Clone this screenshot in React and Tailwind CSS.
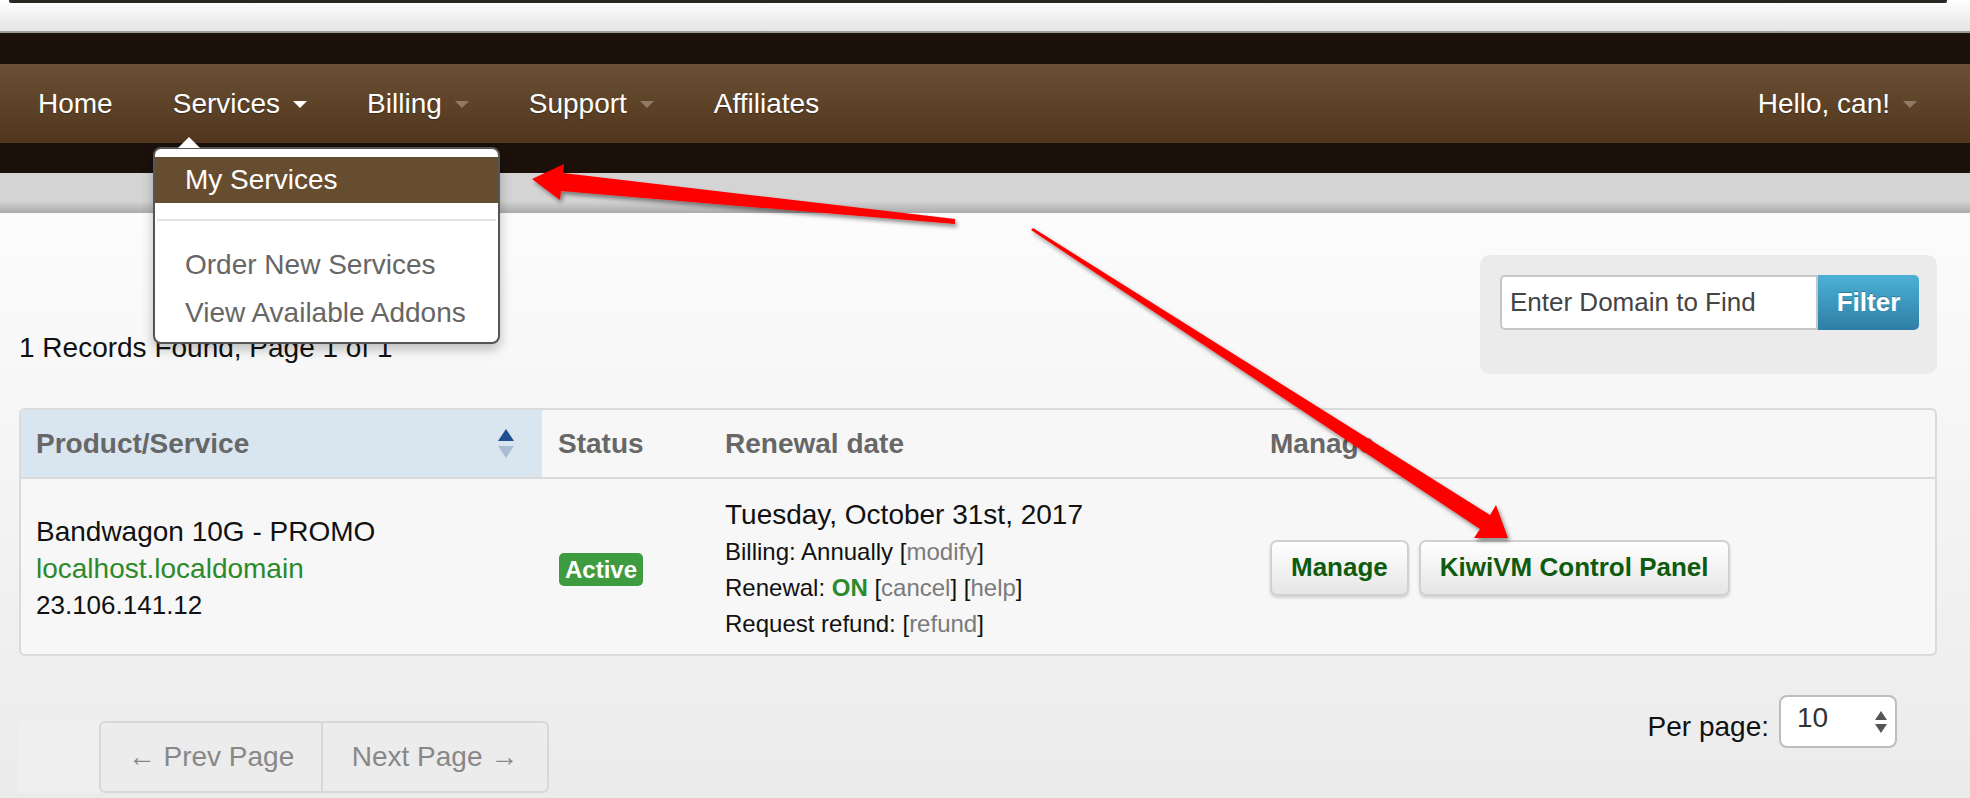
import React from 'react';

const Caret = ({ tone }) => (
  <span className={`ml-[13px] mt-[2px] inline-block h-0 w-0 border-x-[7px] border-t-[7px] border-x-transparent ${tone}`} />
);

function SortIcon() {
  return (
    <svg width="18" height="32" viewBox="0 0 18 32">
      <polygon points="1,13 9,1 17,13" fill="#1f4f8f" />
      <polygon points="1,18 17,18 9,30" fill="#a9bdd2" />
    </svg>
  );
}

function Arrows() {
  return (
    <svg className="pointer-events-none absolute left-0 top-0" width="1970" height="798">
      <defs>
        <filter id="sh" x="-10%" y="-10%" width="120%" height="130%">
          <feDropShadow dx="2" dy="3" stdDeviation="2" floodColor="#000" floodOpacity="0.45" />
        </filter>
      </defs>
      <polygon
        filter="url(#sh)"
        fill="#ff0000"
        points="955,219 563,173 564,164 532,179 560,200 561,191 955,224"
      />
      <polygon
        filter="url(#sh)"
        fill="#ff0000"
        points="1033,228 1490,515 1496,505 1508,538 1474,538 1480,529 1031,230"
      />
    </svg>
  );
}

export default function App() {
  return (
    <div className="relative flex h-[798px] w-[1970px] flex-col overflow-hidden font-['Liberation_Sans',Arial,sans-serif]">
      {/* window strip */}
      <div className="h-[33px] border-b-2 border-[#9c9c9c] bg-linear-to-b from-white to-[#e4e4e4]">
        <div className="ml-[9px] h-[3px] w-[1938px] rounded-b-[2px] bg-[#2a2622]" />
      </div>
      <div className="h-[31px] bg-[#1b100a]" />

      <nav className="flex h-[79px] items-center bg-linear-to-b from-[#6a5034] to-[#51361d] pl-[8px] pr-[23px] text-[28px] text-white [text-shadow:0_1px_1px_rgba(0,0,0,0.35)]">
        <a className="px-[30px]">Home</a>
        <a className="flex items-center px-[30px]">Services<Caret tone="border-t-white" /></a>
        <a className="flex items-center px-[30px]">Billing<Caret tone="border-t-[#8f7b65]" /></a>
        <a className="flex items-center px-[30px]">Support<Caret tone="border-t-[#8f7b65]" /></a>
        <a className="px-[30px]">Affiliates</a>
        <a className="ml-auto flex items-center px-[30px]">Hello, can!<Caret tone="border-t-[#8f7b65]" /></a>
      </nav>

      <div className="h-[30px] bg-[#1b100a]" />
      <div className="h-[40px] bg-linear-to-b from-[#d4d4d4] from-70% to-[#ababab]" />

      <main className="flex-1 bg-linear-to-b from-[#fcfcfc] to-[#ebebeb] pl-[19px] pr-[33px] pt-[42px]">
        <div className="flex items-end justify-between">
          <div className="mb-[10px] text-[28px] leading-[32px] text-[#111]">1 Records Found, Page 1 of 1</div>
          <div className="flex h-[119px] w-[457px] items-start rounded-[10px] bg-[#ebebeb] pl-[20px] pt-[20px]">
            <input
              placeholder="Enter Domain to Find"
              className="h-[55px] w-[318px] rounded-l-[5px] border-2 border-[#c6c6c6] bg-white pl-[8px] text-[26px] text-[#444] placeholder:text-[#444] outline-none"
            />
            <button className="h-[55px] w-[101px] rounded-r-[5px] bg-linear-to-b from-[#4cb1d6] to-[#2e7ea6] text-[26px] font-bold text-white [text-shadow:0_-1px_0_rgba(0,0,0,0.25)]">
              Filter
            </button>
          </div>
        </div>

        <div className="mt-[34px] overflow-hidden rounded-[6px] border-2 border-[#dadada] bg-[#f7f7f7]">
          <div className="grid h-[69px] grid-cols-[521px_166px_545px_1fr] border-b-2 border-[#dadada] text-[28px] font-bold text-[#676767]">
            <div className="flex items-center justify-between bg-[#d9e6f0] pl-[15px] pr-[27px]">
              Product/Service
              <SortIcon />
            </div>
            <div className="flex items-center pl-[16px]">Status</div>
            <div className="flex items-center pl-[17px]">Renewal date</div>
            <div className="flex items-center pl-[17px]">Manage</div>
          </div>

          <div className="grid h-[175px] grid-cols-[521px_166px_545px_1fr] items-center text-[#111]">
            <div className="pl-[15px] pt-[3px]">
              <div className="text-[28px] leading-[37px]">Bandwagon 10G - PROMO</div>
              <div className="text-[28px] leading-[37px] text-[#2b8a2b]">localhost.localdomain</div>
              <div className="text-[26px] leading-[36px]">23.106.141.12</div>
            </div>
            <div className="pl-[17px] pt-[6px]">
              <span className="inline-flex h-[33px] items-center rounded-[5px] bg-[#3f9b3f] px-[6px] text-[24px] font-bold text-white">
                Active
              </span>
            </div>
            <div className="pl-[17px] pt-[5px]">
              <div className="text-[28px] leading-[38px]">Tuesday, October 31st, 2017</div>
              <div className="text-[24px] leading-[36px]">
                Billing: Annually [<span className="text-[#7a7a7a]">modify</span>]
              </div>
              <div className="text-[24px] leading-[36px]">
                Renewal: <span className="font-bold text-[#2b8a2b]">ON</span> [<span className="text-[#7a7a7a]">cancel</span>] [<span className="text-[#7a7a7a]">help</span>]
              </div>
              <div className="text-[24px] leading-[36px]">
                Request refund: [<span className="text-[#7a7a7a]">refund</span>]
              </div>
            </div>
            <div className="flex gap-[10px] pl-[17px] pt-[2px]">
              <button className="h-[56px] rounded-[7px] border-2 border-[#d0d0d0] bg-linear-to-b from-white to-[#e6e6e6] px-[19px] text-[26px] font-bold text-[#0e5a0e] shadow-[0_2px_3px_rgba(0,0,0,0.15)]">
                Manage
              </button>
              <button className="h-[56px] rounded-[7px] border-2 border-[#d0d0d0] bg-linear-to-b from-white to-[#e6e6e6] px-[19px] text-[26px] font-bold text-[#0e5a0e] shadow-[0_2px_3px_rgba(0,0,0,0.15)]">
                KiwiVM Control Panel
              </button>
            </div>
          </div>
        </div>

        <div className="mt-[39px] flex items-start justify-between">
          <div className="ml-[-1px] mt-[26px] rounded-[6px] bg-[#efefef] pl-[81px]">
            <div className="flex h-[72px] rounded-[6px] border-2 border-[#d8d8d8] bg-[#ececec] text-[28px] text-[#888]">
              <div className="flex w-[222px] items-center justify-center border-r-2 border-[#d8d8d8]">← Prev Page</div>
              <div className="flex w-[224px] items-center justify-center">Next Page →</div>
            </div>
          </div>
          <div className="mr-[40px] flex items-center">
            <span className="mt-[10px] text-[28px] text-[#111]">Per page:</span>
            <div className="ml-[10px] flex h-[53px] w-[118px] items-start justify-between rounded-[8px] border-2 border-[#bdbdbd] bg-white pl-[16px] pr-[8px] pt-[6px]">
              <span className="text-[28px] leading-[30px] text-[#333]">10</span>
              <svg width="12" height="26" viewBox="0 0 12 26" className="mt-[7px]">
                <polygon points="0,10 6,1 12,10" fill="#555" />
                <polygon points="0,14 12,14 6,23" fill="#555" />
              </svg>
            </div>
          </div>
        </div>
      </main>

      {/* dropdown menu */}
      <div className="absolute left-[153px] top-[147px] h-[197px] w-[347px] rounded-[8px] border-2 border-[#555] bg-white shadow-[0_5px_12px_rgba(0,0,0,0.25)]">
        <span className="absolute left-[23px] top-[-12px] h-0 w-0 border-x-[11px] border-b-[11px] border-x-transparent border-b-white" />
        <div className="mt-[8px] flex h-[46px] items-center bg-[#674d30] pl-[30px] text-[28px] text-white">My Services</div>
        <div className="mx-[2px] mt-[16px] h-[2px] bg-[#e2e2e2]" />
        <div className="mt-[20px] pl-[30px] text-[28px] leading-[48px] text-[#666]">Order New Services</div>
        <div className="pl-[30px] text-[28px] leading-[48px] text-[#666]">View Available Addons</div>
      </div>

      <Arrows />
    </div>
  );
}
